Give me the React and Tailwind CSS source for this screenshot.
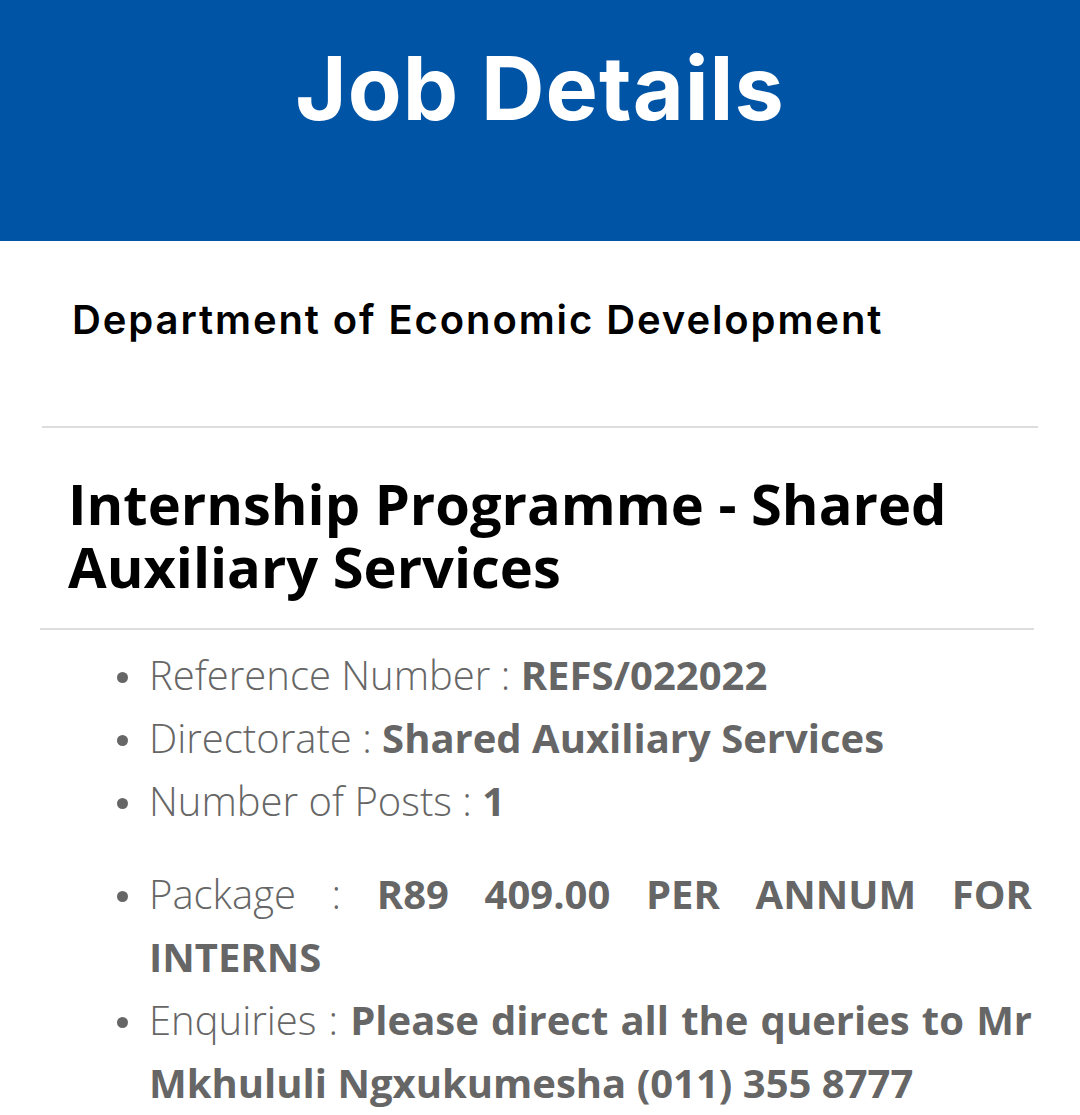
const Item = ({ label, value, justify }) => {
  return (
    <li className="flex items-start">
      <span className="mt-[29px] ml-[117px] mr-[21px] h-[11px] w-[11px] shrink-0 rounded-full bg-[#666666]"></span>
      <p className={"flex-1 pr-[48px] " + (justify ? "text-justify" : "")}>
        <span className="font-light">{label} : </span>
        <span className="font-bold">{value}</span>
      </p>
    </li>
  );
};

const App = () => {
  return (
    <div className="min-h-[1115px] w-[1080px] bg-white">
      <div className="flex h-[241px] justify-center bg-[#0054a5] pt-[38px]">
        <h1 className="font-['Inter',sans-serif] text-[88px] leading-[100px] font-bold tracking-[1px] text-white">
          Job Details
        </h1>
      </div>

      <div className="px-[42px]">
        <h4 className="px-[30px] pt-[51px] pb-[78px] font-['Inter',sans-serif] text-[40px] leading-[56px] font-semibold tracking-[1.9px] text-black">
          Department of Economic Development
        </h4>
        <div className="h-[2px] bg-[#dddddd]"></div>
      </div>

      <div className="px-[40px] pt-[44px] pb-[30px]">
        <h2 className="px-[28px] font-['Open_Sans',sans-serif] text-[56px] leading-[63px] font-bold text-black">
          Internship Programme - Shared Auxiliary Services
        </h2>
      </div>
      <div className="mr-[46px] ml-[40px] h-[2px] bg-[#dddddd]"></div>

      <div className="pt-[13px] font-['Open_Sans',sans-serif] text-[40px] leading-[63px] text-[#666666]">
        <ul>
          <Item label="Reference Number" value="REFS/022022" />
          <Item label="Directorate" value="Shared Auxiliary Services" />
          <Item label="Number of Posts" value="1" />
        </ul>
        <ul className="mt-[30px]">
          <Item label="Package" value="R89 409.00 PER ANNUM FOR INTERNS" justify />
          <Item
            label="Enquiries"
            value="Please direct all the queries to Mr Mkhululi Ngxukumesha (011) 355 8777"
            justify
          />
        </ul>
      </div>
    </div>
  );
};

export default App;
